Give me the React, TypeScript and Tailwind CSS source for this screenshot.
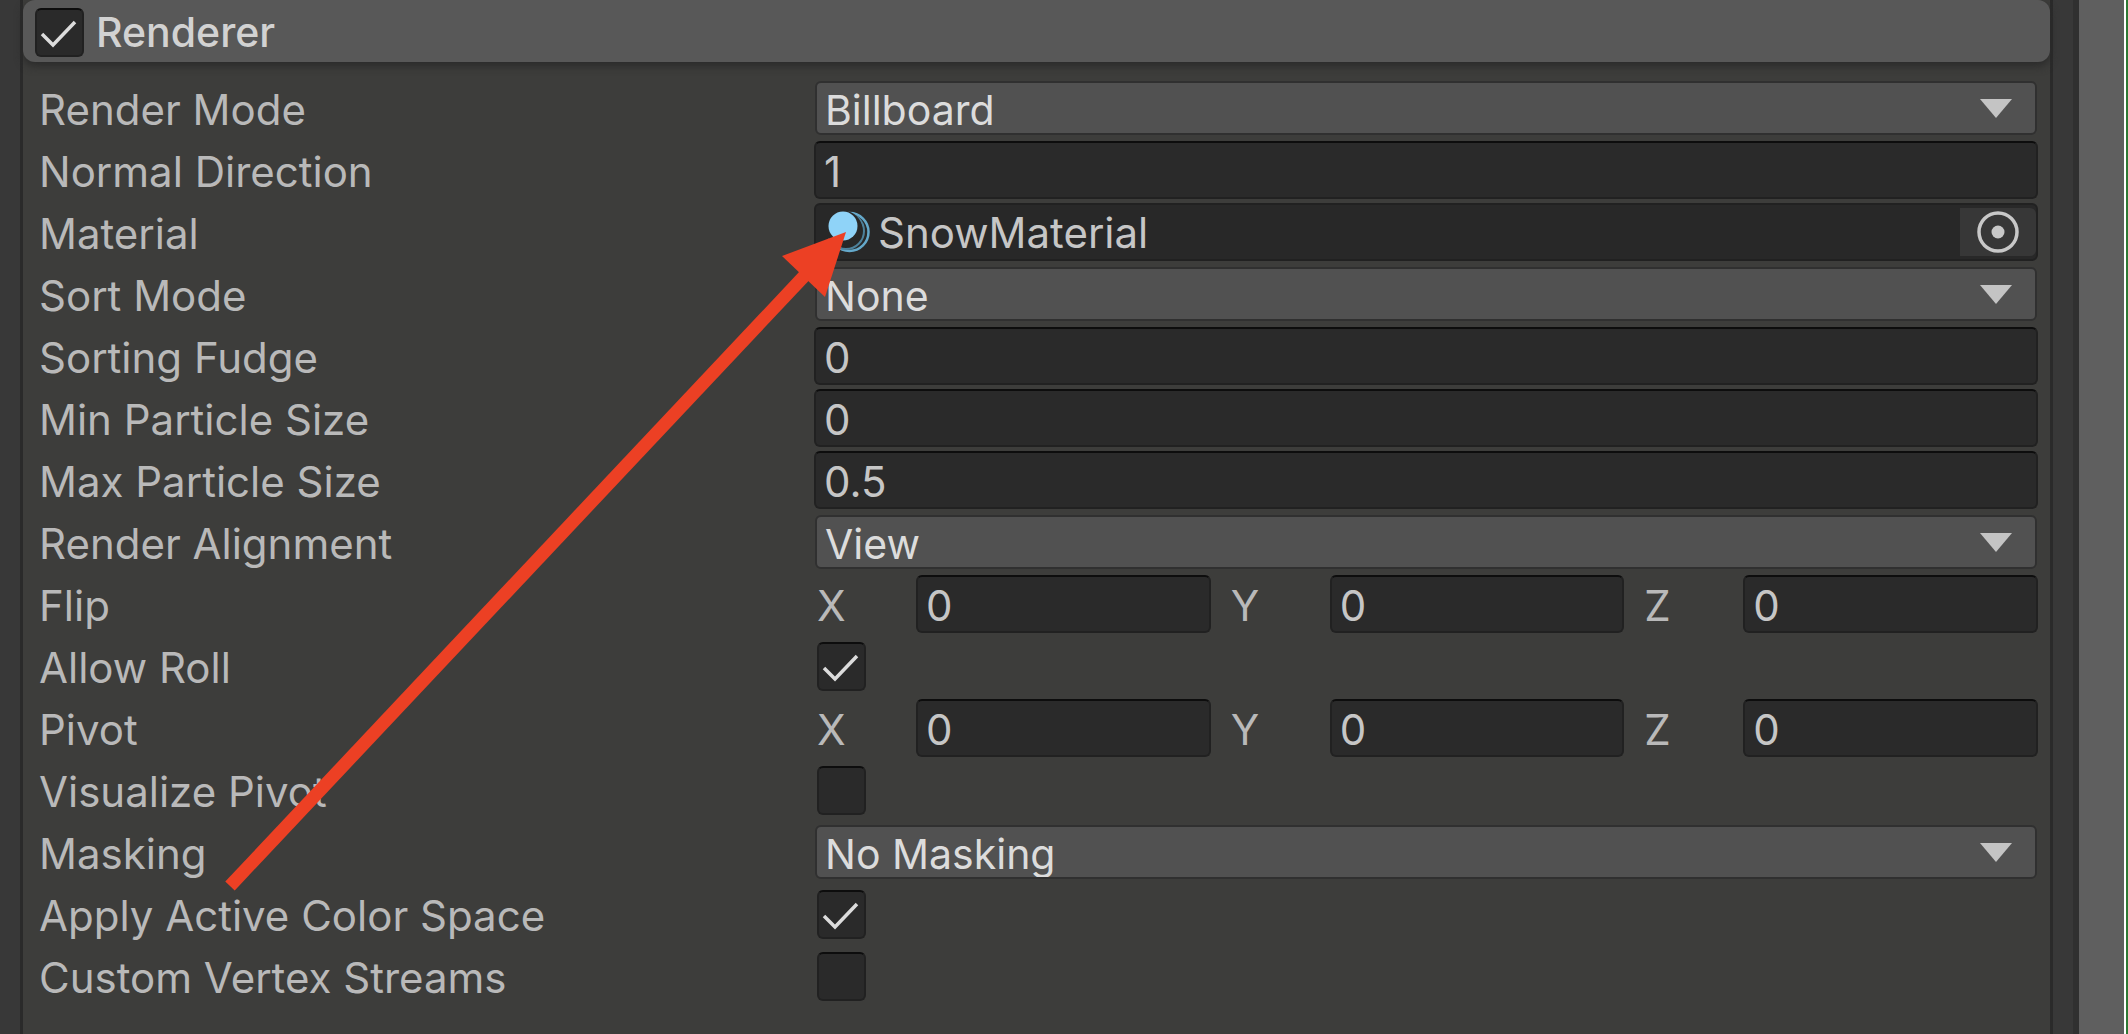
import { useId } from "react"
import type { ReactNode } from "react"

const inset = "rounded-md border-2 border-[#212121] border-t-[#0d0d0d] bg-[#2a2a2a]"

function Check({ id, on, label }: { id?: string; on?: boolean; label?: string }) {
  return (
    <span className={`relative block size-[49px] shrink-0 ${inset}`}>
      <input
        id={id}
        type="checkbox"
        aria-label={label}
        defaultChecked={on}
        className="peer absolute inset-0 size-full appearance-none"
      />
      <svg viewBox="0 0 45 45" fill="none" className="pointer-events-none absolute inset-0 hidden peer-checked:block">
        <path d="M5 24l11 11 22-23" stroke="#dcdcdc" strokeWidth="3.5" />
      </svg>
    </span>
  )
}

function Row({ label, children }: { label: string; children: (id: string) => ReactNode }) {
  const id = useId()
  return (
    <div className="flex h-[62px] items-center">
      <label htmlFor={id} className="w-[775px] shrink-0 pt-1 text-[#b9b9b9]">
        {label}
      </label>
      <div className="min-w-0 flex-1">{children(id)}</div>
    </div>
  )
}

function SelectRow({ label, value }: { label: string; value: string }) {
  return (
    <Row label={label}>
      {(id) => (
        <div className="relative px-px">
          <select
            id={id}
            className="block h-[54px] w-full appearance-none rounded-md border-2 border-[#303030] bg-[#515151] pt-0.5 pl-2 text-[41px] text-[#dcdcdc]"
          >
            <option>{value}</option>
          </select>
          <svg viewBox="0 0 32 20" className="pointer-events-none absolute top-[18px] right-[26px] w-8">
            <path d="M0 0h32L16 19z" fill="#c4c4c4" />
          </svg>
        </div>
      )}
    </Row>
  )
}

function NumberBox({ id, value, label }: { id?: string; value: string; label?: string }) {
  return (
    <input
      id={id}
      aria-label={label}
      defaultValue={value}
      className={`block h-[58px] w-full min-w-0 pt-0.5 pl-2 text-[#c6c6c6] ${inset}`}
    />
  )
}

function InputRow({ label, value }: { label: string; value: string }) {
  return <Row label={label}>{(id) => <NumberBox id={id} value={value} />}</Row>
}

function VectorRow({ label }: { label: string }) {
  return (
    <Row label={label}>
      {(id) => (
        <div className="grid grid-cols-3 gap-5 pl-[3px]">
          {["X", "Y", "Z"].map((axis, i) => (
            <div key={axis} className="flex items-center">
              <span className="w-[99px] shrink-0 pt-1 text-[#b9b9b9]">{axis}</span>
              <NumberBox id={i === 0 ? id : undefined} label={`${label} ${axis}`} value="0" />
            </div>
          ))}
        </div>
      )}
    </Row>
  )
}

function CheckRow({ label, on }: { label: string; on?: boolean }) {
  return (
    <Row label={label}>
      {(id) => (
        <div className="pl-[3px]">
          <Check id={id} on={on} />
        </div>
      )}
    </Row>
  )
}

function MaterialRow() {
  return (
    <Row label="Material">
      {(id) => (
        <div className="flex h-[58px] items-center rounded-md border-2 border-[#212121] bg-[#282828] pl-3">
          <svg viewBox="0 0 42 42" fill="none" className="size-[42px] shrink-0">
            <circle cx="21.5" cy="21" r="19" stroke="#64a8ca" strokeWidth="2.5" />
            <circle cx="18" cy="20" r="18" stroke="#4d819b" strokeWidth="2" />
            <circle cx="16" cy="18" r="18" fill="#282828" />
            <circle cx="15" cy="15" r="14.5" fill="#8fd3f8" />
          </svg>
          <input id={id} defaultValue="SnowMaterial" className="min-w-0 flex-1 pt-0.5 pl-2 text-[#c6c6c6]" />
          <button aria-label="Select material" className="flex h-12 w-[76px] items-center justify-center rounded-r-md bg-[#373737]">
            <svg viewBox="0 0 42 42" fill="none" className="size-[42px]">
              <circle cx="21" cy="21" r="19" stroke="#c8c8c8" strokeWidth="3.5" />
              <circle cx="21" cy="21" r="6.5" fill="#c8c8c8" />
            </svg>
          </button>
        </div>
      )}
    </Row>
  )
}

export default function App() {
  return (
    <div className="relative flex min-h-screen overflow-hidden bg-[#383838] pl-5 font-['Inter',sans-serif] text-[42px] leading-[50px]">
      <section className="min-w-0 flex-1 border-x-[3px] border-[#2a2a2a] bg-[#3d3d3b]">
        <header className="flex h-[62px] items-center gap-3 rounded-xl bg-[#585858] pt-0.5 pl-3 shadow-[0_4px_8px_#2a2a2a]">
          <Check on label="Enable Renderer" />
          <h2 className="text-[41px] font-medium text-[#d2d2d2]">Renderer</h2>
        </header>
        <div className="pt-[15px] pr-3 pl-4">
          <SelectRow label="Render Mode" value="Billboard" />
          <InputRow label="Normal Direction" value="1" />
          <MaterialRow />
          <SelectRow label="Sort Mode" value="None" />
          <InputRow label="Sorting Fudge" value="0" />
          <InputRow label="Min Particle Size" value="0" />
          <InputRow label="Max Particle Size" value="0.5" />
          <SelectRow label="Render Alignment" value="View" />
          <VectorRow label="Flip" />
          <CheckRow label="Allow Roll" on />
          <VectorRow label="Pivot" />
          <CheckRow label="Visualize Pivot" />
          <SelectRow label="Masking" value="No Masking" />
          <CheckRow label="Apply Active Color Space" on />
          <CheckRow label="Custom Vertex Streams" />
        </div>
      </section>

      {/* Scrollbar gutter */}
      <div className="w-[26px] border-r-[6px] border-[#303030]" />
      <div className="w-[49px] border-r-2 border-[#2f7a35] bg-[#5f5f5f]">
        <div className="ml-auto h-full w-[2px] bg-white" />
      </div>

      {/* Arrow pointing at the material slot */}
      <svg viewBox="0 0 846 900" className="pointer-events-none absolute top-0 left-0 w-[846px]">
        <path d="M230 886L808 272" stroke="#ec4024" strokeWidth="13" />
        <path d="M846 232L782 256L825 297z" fill="#ec4024" />
      </svg>
    </div>
  )
}
